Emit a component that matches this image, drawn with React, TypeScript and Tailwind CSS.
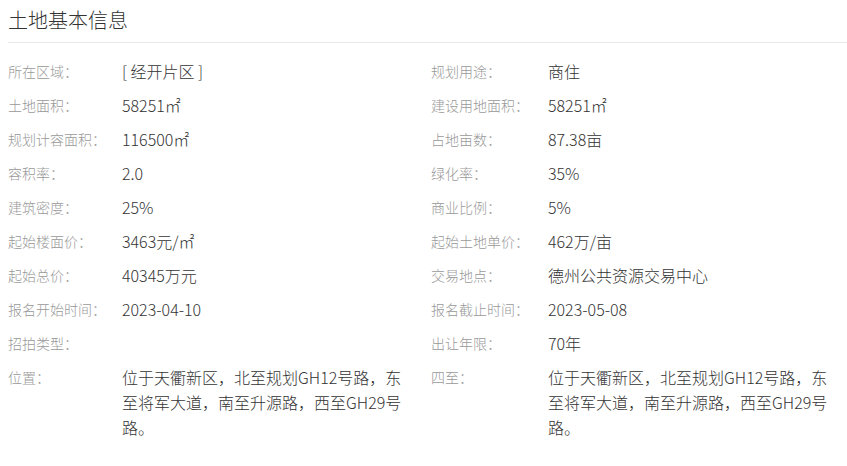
import React from "react";

const rows: [string, string, string, string][] = [
  ["所在区域：", "[ 经开片区 ]", "规划用途：", "商住"],
  ["土地面积：", "58251㎡", "建设用地面积：", "58251㎡"],
  ["规划计容面积：", "116500㎡", "占地亩数：", "87.38亩"],
  ["容积率：", "2.0", "绿化率：", "35%"],
  ["建筑密度：", "25%", "商业比例：", "5%"],
  ["起始楼面价：", "3463元/㎡", "起始土地单价：", "462万/亩"],
  ["起始总价：", "40345万元", "交易地点：", "德州公共资源交易中心"],
  ["报名开始时间：", "2023-04-10", "报名截止时间：", "2023-05-08"],
  ["招拍类型：", "", "出让年限：", "70年"],
  [
    "位置：",
    "位于天衢新区，北至规划GH12号路，东至将军大道，南至升源路，西至GH29号路。",
    "四至：",
    "位于天衢新区，北至规划GH12号路，东至将军大道，南至升源路，西至GH29号路。",
  ],
];

export default function App() {
  return (
    <div
      className="w-[847px] h-[466px] bg-white pl-2 overflow-hidden font-light"
      style={{ fontFamily: '"Noto Sans CJK SC", "Noto Sans", sans-serif' }}
    >
      <div className="pt-[6px] pb-[8px] leading-[28px] text-[20px] text-[#333] border-b border-[#e8e8e8]">
        土地基本信息
      </div>
      <div className="pt-[11px]">
        {rows.map((r, i) => (
          <div key={i} className="flex">
            <div className="w-[423px] flex py-[4.5px]">
              <div className="w-[114px] shrink-0 text-[14px] leading-[25px] text-[#999]">{r[0]}</div>
              <div className="w-[288px] text-[16px] leading-[25px] text-[#333]">{r[1]}</div>
            </div>
            <div className="flex-1 flex py-[4.5px]">
              <div className="w-[117px] shrink-0 text-[14px] leading-[25px] text-[#999]">{r[2]}</div>
              <div className="w-[288px] text-[16px] leading-[25px] text-[#333]">{r[3]}</div>
            </div>
          </div>
        ))}
      </div>
    </div>
  );
}
